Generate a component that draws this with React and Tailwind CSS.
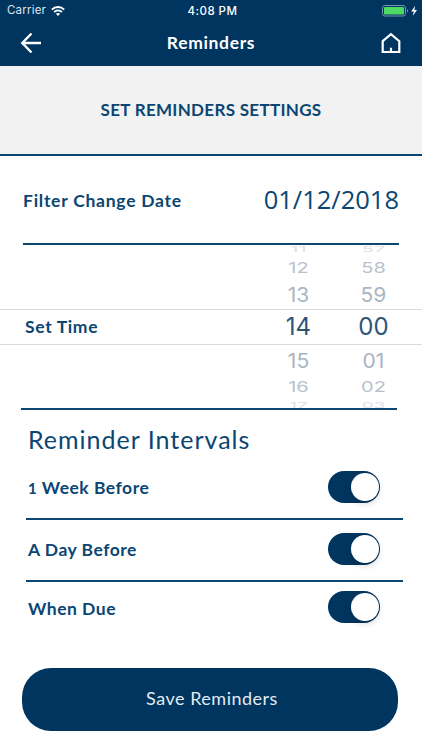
import { useState } from 'react';

const wheelRows = [
  { hour: '11', minute: '57', row: 'h-[11px] items-start', text: 'text-[20px] leading-[9px] scale-y-[0.4] text-[#dde1e6]' },
  { hour: '12', minute: '58', row: 'h-[21px] items-center pt-[3px]', text: 'text-[20px] leading-none scale-y-[0.75] text-[#b8c1cc]' },
  { hour: '13', minute: '59', row: 'h-[32px] items-center pt-[3px]', text: 'text-[21px] leading-none scale-y-[0.96] text-[#a9b5c2]' },
  { hour: '14', minute: '00', row: 'h-[36px] items-center border-y border-[#d9dbdd] pt-px', text: 'text-[24px] leading-none text-[#2b5479]' },
  { hour: '15', minute: '01', row: 'h-[30px] items-center pt-[3px]', text: 'text-[21px] leading-none scale-y-[0.93] text-[#a9b5c2]' },
  { hour: '16', minute: '02', row: 'h-[23px] items-center pt-[2px]', text: 'text-[20px] leading-none scale-y-[0.75] text-[#b8c1cc]' },
  { hour: '17', minute: '03', row: 'h-[12px] items-center pt-[3px]', text: 'text-[19px] leading-none scale-y-[0.4] text-[#dde1e6]' },
];

function StatusBar() {
  return (
    <div className="grid h-[22px] grid-cols-3 items-center pl-[7px] pr-[4px] font-['Inter',sans-serif] text-[11.5px] text-white">
      <div className="flex items-center gap-[5px]">
        <span className="text-[#dbe4ec] tracking-[0.2px]">Carrier</span>
        <svg width="14" height="10" viewBox="0 0 14 10" fill="none" stroke="white" strokeWidth="1.9" className="mb-px">
          <path d="M0.8 3.6C4.3 0.2 9.7 0.2 13.2 3.6" />
          <path d="M3.1 6C5.3 3.9 8.7 3.9 10.9 6" />
          <path d="M4.9 7.8C6 6.7 8 6.7 9.1 7.8L7 10Z" fill="white" stroke="none" />
        </svg>
      </div>
      <span className="pt-px text-center font-medium tracking-[0.45px]">4:08 PM</span>
      <div className="flex items-center justify-end">
        <svg width="36" height="12" viewBox="0 0 36 12">
          <rect x="0.5" y="0.5" width="23" height="10.5" rx="2.5" fill="none" stroke="#7895ad" />
          <rect x="2" y="2" width="20" height="7.5" rx="1.2" fill="#4cd964" />
          <path d="M25 4v3.6c1.4-.6 1.4-3 0-3.6z" fill="#7895ad" />
          <path d="M33.2 0.8L29.2 6.4h2.6L30.8 10.8l4.2-5.9h-2.6z" fill="white" />
        </svg>
      </div>
    </div>
  );
}

function Toggle({ checked, onChange, label }) {
  return (
    <button
      type="button"
      role="switch"
      aria-checked={checked}
      aria-label={label}
      onClick={onChange}
      className={`flex h-[32px] w-[52px] items-center rounded-full px-[1.5px] ${
        checked ? 'justify-end bg-[#00355f]' : 'justify-start bg-slate-300'
      }`}
    >
      <span className="h-[28px] w-[28px] rounded-full bg-white shadow-[0_3px_6px_rgba(0,0,0,0.15)]"></span>
    </button>
  );
}

function App() {
  const [week, setWeek] = useState(true);
  const [day, setDay] = useState(true);
  const [due, setDue] = useState(true);

  return (
    <div className="h-[750px] w-[422px] overflow-hidden bg-white font-['Lato',sans-serif] text-[#0b4673]">
      <header className="h-[65.5px] bg-[#00355f] text-white">
        <StatusBar />
        <div className="flex h-[42px] items-center justify-between pl-[20px] pr-[20px]">
          <svg width="22" height="22" viewBox="0 0 22 22" fill="none" stroke="white" strokeWidth="2.4">
            <path d="M21 11H2.5M11.5 1.5L2.3 11l9.2 9.5" />
          </svg>
          <h1 className="pt-px text-[17.5px] font-bold tracking-[0.65px]">Reminders</h1>
          <svg width="22" height="22" viewBox="0 0 22 22" fill="none" stroke="white" strokeWidth="2.2">
            <path d="M2.7 9.2L11 2.2l8.3 7V20H2.7zM11 15.8V20" />
          </svg>
        </div>
      </header>

      <div className="flex h-[90px] items-center justify-center border-b-2 border-[#0b4673] bg-[#f2f2f2]">
        <h2 className="text-[17px] font-bold tracking-[0.3px]">SET REMINDERS SETTINGS</h2>
      </div>

      <div className="mx-[23px] flex h-[89px] items-center justify-between border-b-2 border-[#0b4673]">
        <span className="pt-[5px] text-[17.5px] font-bold tracking-[0.75px]">Filter Change Date</span>
        <span className="pt-px font-['Open_Sans',sans-serif] text-[25.5px]">01/12/2018</span>
      </div>

      <div className="h-[163px] overflow-hidden font-['Inter',sans-serif]">
        {wheelRows.map((r) => (
          <div key={r.hour} className={`flex justify-between pr-[11px] pl-[25px] ${r.row}`}>
            <span className="font-['Lato',sans-serif] text-[17.5px] font-bold tracking-[0.65px]">
              {r.hour === '14' && 'Set Time'}
            </span>
            <div className="flex">
              <span className={`w-[75px] text-center ${r.text}`}>{r.hour}</span>
              <span className={`w-[75px] text-center ${r.text}`}>{r.minute}</span>
            </div>
          </div>
        ))}
      </div>

      <div className="ml-[21px] w-[376px] border-t-2 border-[#0b4673]"></div>

      <h3 className="flex h-[47px] items-center pt-[14px] pl-[28px] text-[25px] tracking-[1px]">Reminder Intervals</h3>

      <div className="ml-[26px] w-[377px] text-[17.5px] font-bold tracking-[0.5px]">
        <div className="flex h-[63px] items-center justify-between border-b-2 border-[#0b4673] pr-[23px] pl-[2px]">
          <span className="pt-[3px]"><span className="text-[15px]">1</span> Week Before</span>
          <Toggle label="1 Week Before" checked={week} onChange={() => setWeek(!week)} />
        </div>
        <div className="flex h-[62px] items-center justify-between border-b-2 border-[#0b4673] pr-[23px] pb-[2px] pl-[2px]">
          <span className="pt-[4px]">A Day Before</span>
          <Toggle label="A Day Before" checked={day} onChange={() => setDay(!day)} />
        </div>
        <div className="flex h-[51px] items-center justify-between pr-[23px] pl-[2px]">
          <span className="pt-[4px]">When Due</span>
          <Toggle label="When Due" checked={due} onChange={() => setDue(!due)} />
        </div>
      </div>

      <button
        type="button"
        className="mt-[35px] ml-[22px] flex h-[63px] w-[376px] items-center justify-center rounded-[29px] bg-[#00355f] pb-[2px] pl-[4px] text-[18px] tracking-[0.5px] text-[#e3ebf2]"
      >
        Save Reminders
      </button>
    </div>
  );
}

export default App;
